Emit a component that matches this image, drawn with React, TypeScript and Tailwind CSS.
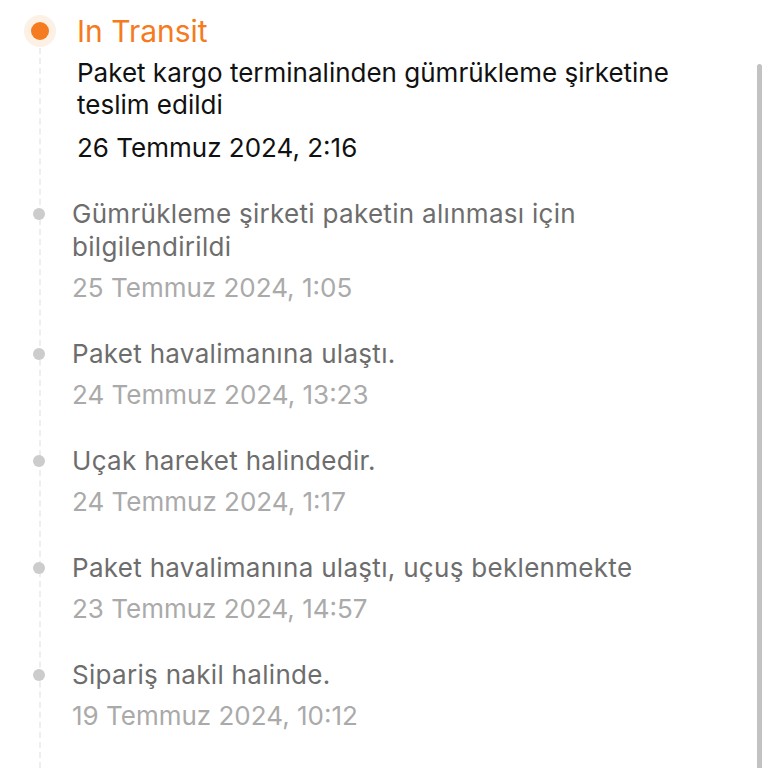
import React from "react";

const items = [
  { title: ["Gümrükleme şirketi paketin alınması için", "bilgilendirildi"], date: "25 Temmuz 2024, 1:05" },
  { title: ["Paket havalimanına ulaştı."], date: "24 Temmuz 2024, 13:23" },
  { title: ["Uçak hareket halindedir."], date: "24 Temmuz 2024, 1:17" },
  { title: ["Paket havalimanına ulaştı, uçuş beklenmekte"], date: "23 Temmuz 2024, 14:57" },
  { title: ["Sipariş nakil halinde."], date: "19 Temmuz 2024, 10:12" },
];

export default function App() {
  return (
    <div
      className="relative w-[768px] h-[768px] overflow-hidden bg-white"
      style={{ fontFamily: "Inter, 'Noto Sans', sans-serif" }}
    >
      <div className="absolute left-[39px] top-[48px] bottom-0 border-l-2 border-dashed border-[#eeeeee]" />
      <div className="absolute left-[757px] top-[64px] w-[5px] h-[720px] rounded-full bg-[#c2c2c2]" />

      <div className="relative flex flex-col pt-[11px]">
        <div className="flex">
          <div className="w-[77px] h-[40px] flex items-center pl-[24px] shrink-0">
            <div className="w-[32px] h-[32px] rounded-full bg-[#fdf0e4] flex items-center justify-center">
              <div className="w-[18px] h-[18px] rounded-full bg-[#f47b20]" />
            </div>
          </div>
          <div className="flex flex-col">
            <div className="text-[30px] leading-[40px] text-[#f47b20]">In Transit</div>
            <div className="mt-[6px] w-[640px] text-[26px] leading-[32px] text-[#111111]">
              Paket kargo terminalinden gümrükleme şirketine teslim edildi
            </div>
            <div className="mt-[11px] text-[26px] leading-[32px] text-[#111111]">26 Temmuz 2024, 2:16</div>
          </div>
        </div>

        {items.map((it, i) => (
          <div key={i} className="flex mt-[33px]">
            <div className="w-[72px] h-[33px] flex items-center pl-[33px] shrink-0">
              <div className="w-[12px] h-[12px] rounded-full bg-[#cccccc]" />
            </div>
            <div className="flex flex-col">
              <div className="text-[26px] leading-[33px] tracking-[0.3px] text-[#6d6d6d]">
                {it.title.map((t, j) => (
                  <div key={j}>{t}</div>
                ))}
              </div>
              <div className="mt-[8px] text-[26px] leading-[33px] text-[#aaaaaa]">{it.date}</div>
            </div>
          </div>
        ))}
      </div>
    </div>
  );
}
